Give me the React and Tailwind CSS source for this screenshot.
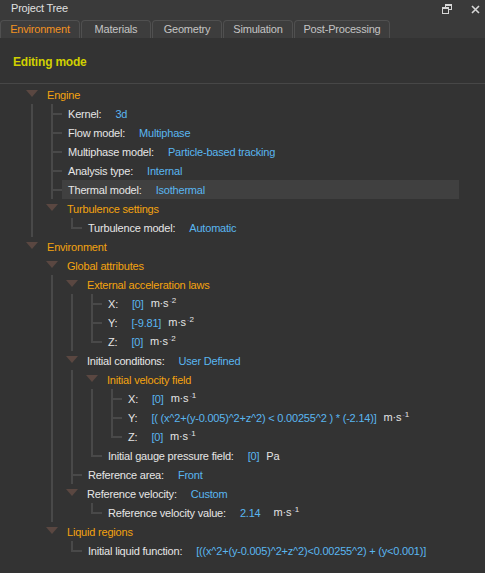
import React from "react";

const ORANGE = "text-[#f4a30f]";

function Unit({ exp, gap = "ml-[7px]" }) {
  return (
    <span className={`${gap} text-[#e4e4e4]`}>
      m·s
      <span className="relative -top-[4px] ml-[1px] text-[8px]">
        <span className="text-[#76689a]">-</span>
        {exp}
      </span>
    </span>
  );
}

const tree = [
  {
    label: "Engine",
    children: [
      { label: "Kernel:", value: "3d" },
      { label: "Flow model:", value: "Multiphase" },
      { label: "Multiphase model:", value: "Particle-based tracking" },
      { label: "Analysis type:", value: "Internal" },
      { label: "Thermal model:", value: "Isothermal", selected: true },
      {
        label: "Turbulence settings",
        children: [{ label: "Turbulence model:", value: "Automatic" }],
      },
    ],
  },
  {
    label: "Environment",
    children: [
      {
        label: "Global attributes",
        children: [
          {
            label: "External acceleration laws",
            children: [
              { label: "X:", value: "[0]", unit: <Unit exp="2" /> },
              { label: "Y:", value: "[-9.81]", unit: <Unit exp="2" /> },
              { label: "Z:", value: "[0]", unit: <Unit exp="2" /> },
            ],
          },
          {
            label: "Initial conditions:",
            value: "User Defined",
            children: [
              {
                label: "Initial velocity field",
                children: [
                  { label: "X:", value: "[0]", unit: <Unit exp="1" /> },
                  {
                    label: "Y:",
                    value: "[( (x^2+(y-0.005)^2+z^2) < 0.00255^2 ) * (-2.14)]",
                    unit: <Unit exp="1" />,
                  },
                  { label: "Z:", value: "[0]", unit: <Unit exp="1" /> },
                ],
              },
              {
                label: "Initial gauge pressure field:",
                value: "[0]",
                unit: <span className="ml-[7px] text-[#e4e4e4]">Pa</span>,
              },
            ],
          },
          { label: "Reference area:", value: "Front" },
          {
            label: "Reference velocity:",
            value: "Custom",
            children: [
              {
                label: "Reference velocity value:",
                value: "2.14",
                unit: <Unit exp="1" gap="ml-[13px]" />,
              },
            ],
          },
        ],
      },
      {
        label: "Liquid regions",
        children: [
          {
            label: "Initial liquid function:",
            value: "[((x^2+(y-0.005)^2+z^2)<0.00255^2) + (y<0.001)]",
          },
        ],
      },
    ],
  },
];

function flatten(nodes, ancestors, out) {
  nodes.forEach((node, i) => {
    const hasNext = i < nodes.length - 1;
    out.push({ node, lines: ancestors, hasNext });
    if (node.children) flatten(node.children, [...ancestors, hasNext], out);
  });
  return out;
}

function Row({ node, lines, hasNext }) {
  const isParent = !!node.children;
  const isGroup = isParent && node.value === undefined;
  return (
    <div className="flex h-[19px] pl-[22px] pr-[26px]">
      {lines.map((on, k) => (
        <div key={k} className="relative w-[20px] shrink-0">
          {on && <div className="absolute left-[9px] top-0 h-full w-[2px] bg-[#494949]" />}
        </div>
      ))}
      <div className="relative w-[20px] shrink-0">
        {isParent ? (
          <svg className="absolute left-[4px] top-[5px]" width="12" height="7" viewBox="0 0 12 7">
            <polygon points="0,0 12,0 6,7" fill="#5a4741" />
          </svg>
        ) : (
          <>
            <div
              className={`absolute left-[9px] top-0 w-[2px] bg-[#494949] ${hasNext ? "h-full" : "h-[11px]"}`}
            />
            <div className="absolute left-[9px] top-[9px] h-[2px] w-[11px] bg-[#494949]" />
          </>
        )}
      </div>
      <div
        className={`flex min-w-0 flex-1 items-center whitespace-nowrap pt-[1px] leading-[18px] ${
          isParent ? "pl-[5px]" : "pl-[6px]"
        } ${node.selected ? "bg-[#404040]" : ""}`}
      >
        <span className={isGroup ? ORANGE : "text-[#e6e6e6]"}>{node.label}</span>
        {node.value !== undefined && (
          <span className="ml-[14px] text-[#5ab6f0]">{node.value}</span>
        )}
        {node.unit}
      </div>
    </div>
  );
}

const tabs = [
  { name: "Environment", w: "w-[80px]", active: true },
  { name: "Materials", w: "w-[70px]" },
  { name: "Geometry", w: "w-[70px]" },
  { name: "Simulation", w: "w-[70px]" },
  { name: "Post-Processing", w: "w-[96px]" },
];

export default function App() {
  const rows = flatten(tree, [], []);
  return (
    <div className="h-[573px] w-[485px] overflow-hidden bg-[#333333] font-['Liberation_Sans',Arial,sans-serif] text-[11px] tracking-[-0.2px] text-[#e4e4e4]">
      {/* Title bar */}
      <div className="flex h-[20px] items-start justify-between bg-[#3a3a3a] pl-[11px] pr-[5px]">
        <span className="leading-[16px] text-[#e0e0e0]">Project Tree</span>
        <div className="flex items-center gap-[19px] pt-[4px]">
          <svg width="10" height="10" viewBox="0 0 10 10">
            <rect x="3.5" y="0.5" width="6" height="5" fill="none" stroke="#d6d6d6" />
            <rect x="3" y="0" width="7" height="2" fill="#d6d6d6" />
            <rect x="0.5" y="3.5" width="6" height="6" fill="#3a3a3a" stroke="#d6d6d6" />
            <rect x="0" y="3" width="7" height="2" fill="#d6d6d6" />
          </svg>
          <svg width="9" height="9" viewBox="0 0 9 9" className="mt-[1px]">
            <path d="M1 1 L8 8 M8 1 L1 8" stroke="#d6d6d6" strokeWidth="1.6" />
          </svg>
        </div>
      </div>
      {/* Tabs */}
      <div className="flex h-[18px] items-end gap-[1px] bg-[#3a3a3a]">
        {tabs.map((t) => (
          <div
            key={t.name}
            className={`${t.w} flex h-[18px] shrink-0 justify-center rounded-t-[4px] border border-b-0 border-[#505050] bg-[#3d3d3d] leading-[16px] ${
              t.active ? "text-[#f39221]" : "text-[#c4c4c4]"
            }`}
          >
            {t.name}
          </div>
        ))}
      </div>
      {/* Editing mode */}
      <div className="h-[45px] pl-[13px] pt-[16px]">
        <span className="text-[12px] font-bold leading-[16px] text-[#d0d000]">Editing mode</span>
      </div>
      <div className="h-[1px] bg-[#474747]" />
      <div className="pt-[1px]">
        {rows.map((r, i) => (
          <Row key={i} {...r} />
        ))}
      </div>
    </div>
  );
}
